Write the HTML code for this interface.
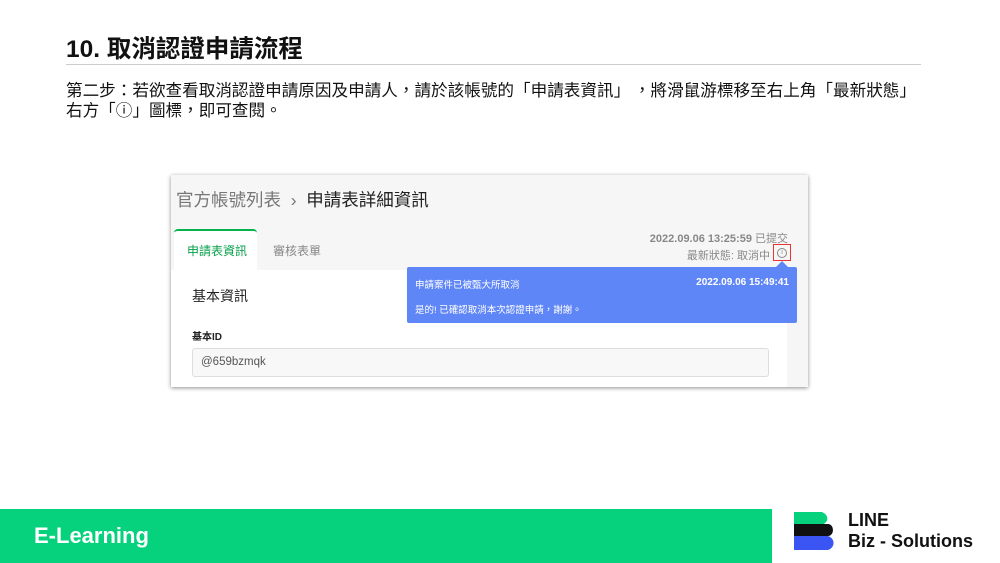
<!DOCTYPE html><html><head><meta charset="utf-8"><style>
*{margin:0;padding:0;box-sizing:border-box}
body{width:1000px;height:563px;background:#fff;position:relative;overflow:hidden;font-family:"Liberation Sans","Noto Sans CJK TC",sans-serif;color:#111}
.a{position:absolute}
</style></head><body>
<div class="a" style="left:66px;top:30px;font-size:24.5px;font-weight:bold;white-space:nowrap">10. 取消認證申請流程</div>
<div class="a" style="left:66px;top:64px;width:855px;height:1px;background:#ccc"></div>
<div class="a" style="left:66px;top:79px;font-size:16.6px;line-height:20px;width:900px;white-space:nowrap;font-family:'Noto Sans CJK TC',sans-serif">第二步：若欲查看取消認證申請原因及申請人，請於該帳號的「申請表資訊」 ，將滑鼠游標移至右上角「最新狀態」<br>右方「ⓘ」圖標，即可查閱。</div>
<div class="a" style="left:171px;top:175px;width:637px;height:212px;background:#f6f6f6;box-shadow:0 1px 4px rgba(0,0,0,.45);overflow:hidden">
 <div class="a" style="left:5px;top:12px;font-size:17.5px;color:#777;white-space:nowrap">官方帳號列表 &nbsp;›&nbsp; <span style="color:#222">申請表詳細資訊</span></div>
 <div class="a" style="left:3px;top:54px;width:83px;height:42px;background:#fff;border-top:2px solid #06b14f;border-radius:4px 4px 0 0"></div>
 <div class="a" style="left:16px;top:67px;font-size:12px;color:#06a04a">申請表資訊</div>
 <div class="a" style="left:102px;top:67px;font-size:12px;color:#888">審核表單</div>
 <div class="a" style="left:0;top:95px;width:616px;height:120px;background:#fff"></div>
 <div class="a" style="right:20px;top:55px;font-size:11px;color:#888;font-weight:bold;white-space:nowrap">2022.09.06 13:25:59 <span style="font-weight:normal">已提交</span></div>
 <div class="a" style="right:38px;top:72px;font-size:11px;color:#888;white-space:nowrap">最新狀態: 取消中</div>
 <div class="a" style="left:602px;top:69px;width:18px;height:17px;border:1.5px solid #e33;"></div>
 <div class="a" style="left:606px;top:73px;width:10px;height:10px;border:1px solid #888;border-radius:50%;font-size:7px;line-height:8px;text-align:center;color:#888">i</div>
 <div class="a" style="left:236px;top:92px;width:390px;height:56px;background:#5f86f7;border-radius:2px;color:#fff;font-size:9.5px">
  <div class="a" style="left:8px;top:10px">申請案件已被甄大所取消</div>
  <div class="a" style="right:8px;top:10px;font-weight:bold;font-size:10px">2022.09.06 15:49:41</div>
  <div class="a" style="left:8px;top:35px">是的! 已確認取消本次認證申請，謝謝。</div>
 </div>
 <div class="a" style="left:605px;top:86px;border:6px solid transparent;border-bottom-color:#5f86f7;border-top:0"></div>
 <div class="a" style="left:21px;top:111px;font-size:14px;color:#222">基本資訊</div>
 <div class="a" style="left:21px;top:153px;font-size:10px;color:#222;font-weight:bold">基本ID</div>
 <div class="a" style="left:21px;top:173px;width:577px;height:29px;border:1px solid #ddd;border-radius:3px;background:#f8f8f8;font-size:11.5px;color:#555;padding:7px 8px">@659bzmqk</div>
</div>
<div class="a" style="left:0;top:509px;width:772px;height:54px;background:#06d17c"></div>
<div class="a" style="left:34px;top:523px;font-size:22px;font-weight:bold;color:#fff">E-Learning</div>
<svg class="a" style="left:794px;top:512px" width="42" height="38" viewBox="0 0 42 38"><path d="M0 0H28a13 8 0 0 1 0 13H0Z" fill="#06d17c"/><path d="M0 12H34a5 6 0 0 1 0 12H0Z" fill="#111"/><path d="M0 24H34a8 7 0 0 1-6 14H0Z" fill="#3b55f5"/></svg>
<div class="a" style="left:848px;top:510px;font-size:18px;font-weight:bold;line-height:21px;color:#111;white-space:nowrap">LINE<br>Biz - Solutions</div>
</body></html>
